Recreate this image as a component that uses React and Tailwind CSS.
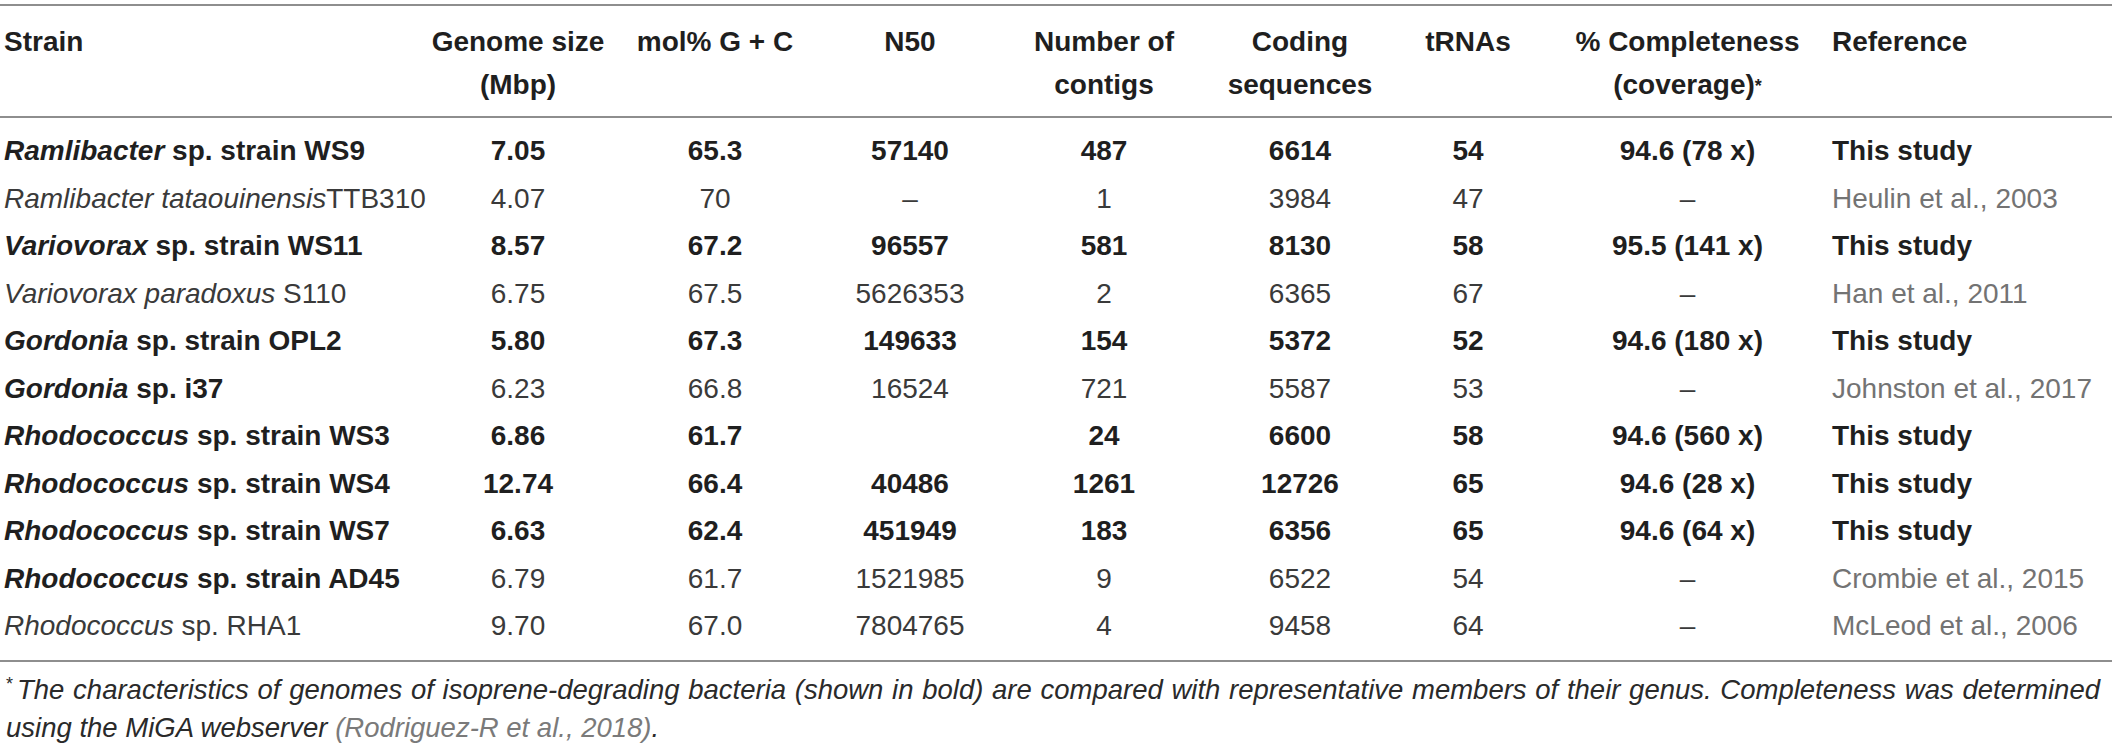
import React from "react";

const GRID =
  "grid grid-cols-[425px_186px_208px_182px_206px_186px_150px_289px_1fr]";

const rows = [
  { g: "Ramlibacter", rest: " sp. strain WS9", bold: true, v: ["7.05", "65.3", "57140", "487", "6614", "54", "94.6 (78 x)"], ref: "This study" },
  { g: "Ramlibacter tataouinensis", rest: "TTB310", bold: false, v: ["4.07", "70", "–", "1", "3984", "47", "–"], ref: "Heulin et al., 2003" },
  { g: "Variovorax", rest: " sp. strain WS11", bold: true, v: ["8.57", "67.2", "96557", "581", "8130", "58", "95.5 (141 x)"], ref: "This study" },
  { g: "Variovorax paradoxus", rest: " S110", bold: false, v: ["6.75", "67.5", "5626353", "2", "6365", "67", "–"], ref: "Han et al., 2011" },
  { g: "Gordonia", rest: " sp. strain OPL2", bold: true, v: ["5.80", "67.3", "149633", "154", "5372", "52", "94.6 (180 x)"], ref: "This study" },
  { g: "Gordonia", rest: " sp. i37", bold: true, valsNormal: true, v: ["6.23", "66.8", "16524", "721", "5587", "53", "–"], ref: "Johnston et al., 2017" },
  { g: "Rhodococcus", rest: " sp. strain WS3", bold: true, v: ["6.86", "61.7", "", "24", "6600", "58", "94.6 (560 x)"], ref: "This study" },
  { g: "Rhodococcus", rest: " sp. strain WS4", bold: true, v: ["12.74", "66.4", "40486", "1261", "12726", "65", "94.6 (28 x)"], ref: "This study" },
  { g: "Rhodococcus", rest: " sp. strain WS7", bold: true, v: ["6.63", "62.4", "451949", "183", "6356", "65", "94.6 (64 x)"], ref: "This study" },
  { g: "Rhodococcus", rest: " sp. strain AD45", bold: true, valsNormal: true, v: ["6.79", "61.7", "1521985", "9", "6522", "54", "–"], ref: "Crombie et al., 2015" },
  { g: "Rhodococcus", rest: " sp. RHA1", bold: false, v: ["9.70", "67.0", "7804765", "4", "9458", "64", "–"], ref: "McLeod et al., 2006" },
];

function Row({ r }) {
  const valBold = r.bold && !r.valsNormal;
  const nameCls = r.bold ? "font-bold text-[#1f1f1f]" : "font-normal text-[#3a3a3a]";
  const valCls = valBold ? "font-bold text-[#1f1f1f]" : "font-normal text-[#3a3a3a]";
  return (
    <div className={`${GRID} h-[47.5px] items-center`}>
      <div className={`pl-[4px] whitespace-nowrap ${nameCls}`}>
        <span className="italic">{r.g}</span>
        {r.rest}
      </div>
      {r.v.map((x, i) => (
        <div key={i} className={`text-center whitespace-nowrap ${valCls}`}>
          {x}
        </div>
      ))}
      <div
        className={`whitespace-nowrap ${
          valBold ? "font-bold text-[#1f1f1f]" : "font-normal text-[#737373]"
        }`}
      >
        {r.ref}
      </div>
    </div>
  );
}

export default function App() {
  return (
    <div className="w-[2117px] h-[747px] bg-white font-['Liberation_Sans',Arial,sans-serif] overflow-hidden">
      <div className="w-[2112px] pt-[4px]">
        {/* header */}
        <div
          className={`${GRID} border-t-2 border-b-2 border-[#8e8e8e] pt-[14px] pb-[10px] text-[28px] leading-[43px] font-bold text-[#1f1f1f] items-start`}
        >
          <div className="pl-[4px]">Strain</div>
          <div className="text-center whitespace-nowrap">
            Genome size
            <br />
            (Mbp)
          </div>
          <div className="text-center whitespace-nowrap">mol% G + C</div>
          <div className="text-center">N50</div>
          <div className="text-center whitespace-nowrap">
            Number of
            <br />
            contigs
          </div>
          <div className="text-center whitespace-nowrap">
            Coding
            <br />
            sequences
          </div>
          <div className="text-center">tRNAs</div>
          <div className="text-center whitespace-nowrap">
            % Completeness
            <br />
            (coverage)<sup className="text-[18px] relative top-[-2px]">*</sup>
          </div>
          <div>Reference</div>
        </div>

        {/* body */}
        <div className="pt-[9.5px] pb-[10px] border-b-2 border-[#8e8e8e] text-[28px]">
          {rows.map((r, i) => (
            <Row key={i} r={r} />
          ))}
        </div>

        {/* footer */}
        <div className="pt-[9px] pl-[6px] pr-[12px] text-[27.5px] leading-[38px] italic text-[#2a2a2a]">
          <div className="text-justify [text-align-last:justify] whitespace-nowrap">
            <sup className="not-italic text-[18px] mr-[4px]">*</sup>
            The characteristics of genomes of isoprene-degrading bacteria (shown in bold) are compared with representative members of their genus. Completeness was determined
          </div>
          <div>
            using the MiGA webserver{" "}
            <span className="text-[#7a7a7a]">(Rodriguez-R et al., 2018)</span>.
          </div>
        </div>
      </div>
    </div>
  );
}
